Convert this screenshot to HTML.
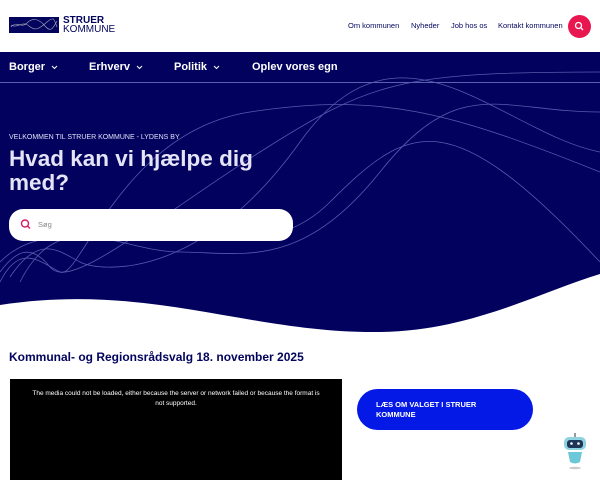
<!DOCTYPE html>
<html><head><meta charset="utf-8"><style>
*{margin:0;padding:0;box-sizing:border-box}
body{width:600px;height:480px;overflow:hidden;background:#fff;font-family:"Liberation Sans",Arial,sans-serif;position:relative}
.hdr{height:52px;position:relative}
.top a{position:absolute;top:21px;font-size:7.5px;color:#03045e;white-space:nowrap}
.srch{position:absolute;left:568px;top:15px;width:23px;height:23px;border-radius:50%;background:#e8174f}
.dark{position:absolute;left:0;top:52px;width:600px;height:290px;background:#02025e;overflow:hidden}
.nav{position:absolute;top:52px;left:0;width:600px;height:31px;border-bottom:1px solid #5a5fb0;color:#fff;font-weight:bold;font-size:11px}
.nav span{position:absolute;top:9px;white-space:nowrap}
.nav svg{margin-left:6px;vertical-align:middle}
</style></head><body>
<div class="hdr">
<svg style="position:absolute;left:9px;top:17px" width="50" height="16" viewBox="0 0 50 16"><rect width="50" height="16" fill="#03045e"/><path d="M2 10 C8 3 12 12 18 6 S30 2 36 9 S44 11 48 4" stroke="#aab" fill="none" stroke-width=".6"/><path d="M2 8 C9 12 13 3 20 9 S31 11 38 5 S45 2 48 10" stroke="#aab" fill="none" stroke-width=".6"/></svg>
<div style="position:absolute;left:63px;top:16px;font-size:10px;font-weight:bold;color:#03045e;line-height:9px">STRUER</div>
<div style="position:absolute;left:63px;top:25px;font-size:10px;color:#03045e;line-height:9px">KOMMUNE</div>
<div class="top"><a style="left:348px">Om kommunen</a><a style="left:411px">Nyheder</a><a style="left:451px">Job hos os</a><a style="left:498px">Kontakt kommunen</a></div>
<div class="srch"><svg width="23" height="23"><circle cx="10.5" cy="10.5" r="3" stroke="#fff" fill="none" stroke-width="1.3"/><path d="M12.7 12.7L15 15" stroke="#fff" stroke-width="1.3"/></svg></div>
</div>
<div class="dark">
<svg width="600" height="290" style="position:absolute;left:0;top:0">
<g stroke="#6b70c0" fill="none" stroke-width=".8" opacity=".8">
<path d="M0 230 C20 190 40 210 60 220 S120 80 250 60 S450 60 600 120"/>
<path d="M0 220 C15 200 30 190 50 215 S150 170 260 100 S400 20 600 20"/>
<path d="M10 225 C40 180 60 200 80 210 S200 230 300 90 S500 80 600 100"/>
<path d="M0 210 C30 180 60 190 100 170 S250 230 330 150 S450 50 600 210"/>
<path d="M20 230 C60 150 120 200 180 200 S300 220 380 120 S500 60 600 60"/>
</g>
<path d="M0 253 C150 230 250 282 380 280 C470 279 540 240 600 222 L600 290 L0 290Z" fill="#fff"/>
</svg>
<div style="position:absolute;left:9px;top:82px;font-size:7px;color:#dfe0f5">VELKOMMEN TIL STRUER KOMMUNE - LYDENS BY</div>
<div style="position:absolute;left:9px;top:95px;font-size:22.5px;font-weight:bold;color:#e4e4f6;line-height:24px">Hvad kan vi hjælpe dig<br>med?</div>
<div style="position:absolute;left:9px;top:157px;width:284px;height:32px;border-radius:14px;background:#fff">
<svg width="30" height="32" style="position:absolute;left:6px;top:0"><circle cx="10" cy="14.5" r="3.5" stroke="#d81b60" fill="none" stroke-width="1.4"/><path d="M12.6 17L15 19.5" stroke="#d81b60" stroke-width="1.4"/></svg>
<span style="position:absolute;left:29px;top:11px;font-size:7.5px;color:#888">Søg</span></div>
</div>
<div class="nav">
<span style="left:9px">Borger<svg width="7" height="5"><path d="M1 1L3.5 3.5L6 1" stroke="#fff" fill="none" stroke-width="1"/></svg></span>
<span style="left:89px">Erhverv<svg width="7" height="5"><path d="M1 1L3.5 3.5L6 1" stroke="#fff" fill="none" stroke-width="1"/></svg></span>
<span style="left:174px">Politik<svg width="7" height="5"><path d="M1 1L3.5 3.5L6 1" stroke="#fff" fill="none" stroke-width="1"/></svg></span>
<span style="left:252px">Oplev vores egn</span></div>
<div style="position:absolute;left:9px;top:350px;font-size:12px;font-weight:bold;color:#03045e">Kommunal- og Regionsrådsvalg 18. november 2025</div>
<div style="position:absolute;left:10px;top:379px;width:332px;height:101px;background:#000;color:#fff;font-size:6.5px;text-align:center;padding:10px 18px;line-height:10px">The media could not be loaded, either because the server or network failed or because the format is not supported.</div>
<div style="position:absolute;left:357px;top:389px;width:176px;height:41px;border-radius:21px;background:#0419e6;color:#fff;font-weight:bold;font-size:7.5px;padding:11px 0 0 19px;line-height:10px">LÆS OM VALGET I STRUER<br>KOMMUNE</div>
<svg style="position:absolute;left:560px;top:431px" width="30" height="40"><line x1="15" y1="2" x2="15" y2="6" stroke="#334" stroke-width="1"/><rect x="4" y="6" width="22" height="13" rx="5" fill="#8fd3e0"/><rect x="7" y="9" width="16" height="8" rx="3" fill="#1d3557"/><circle cx="11.5" cy="12.5" r="1.3" fill="#fff"/><circle cx="18.5" cy="12.5" r="1.3" fill="#fff"/><path d="M8 21 H22 L20 31 Q15 34 10 31Z" fill="#6cc7d9"/><ellipse cx="15" cy="37" rx="6" ry="1.2" fill="#ccc"/></svg>
</body></html>
